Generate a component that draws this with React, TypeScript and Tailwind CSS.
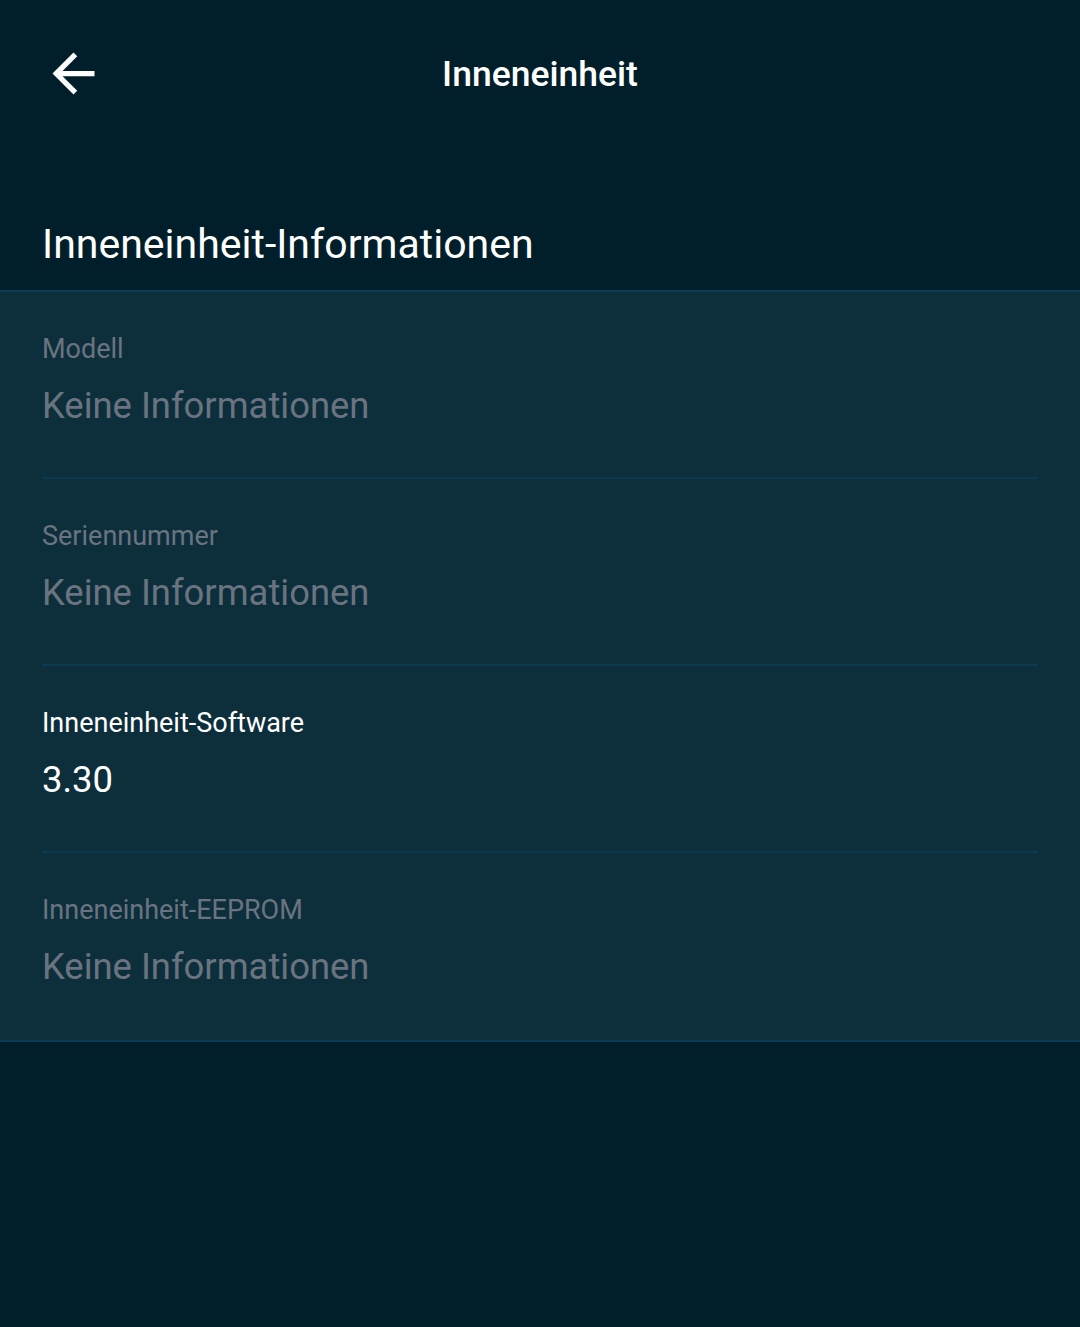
const rows = [
  { label: "Modell", value: "Keine Informationen", active: false },
  { label: "Seriennummer", value: "Keine Informationen", active: false },
  { label: "Inneneinheit-Software", value: "3.30", active: true },
  { label: "Inneneinheit-EEPROM", value: "Keine Informationen", active: false },
];

function BackArrow() {
  return (
    <svg viewBox="0 0 24 24" className="w-[63px] h-[63px]" fill="#ffffff">
      <path d="M20 11H7.83l5.59-5.59L12 4l-8 8 8 8 1.41-1.41L7.83 13H20v-2z" />
    </svg>
  );
}

export default function App() {
  return (
    <div className="min-h-[1327px] w-[1080px] bg-[#001f2a] font-['Roboto',sans-serif]">
      {/* Top bar */}
      <div className="relative h-[148px] flex items-start justify-center">
        <button className="absolute left-[42px] top-[42px]">
          <BackArrow />
        </button>
        <h1 className="mt-[50px] text-[35.5px] leading-[48px] font-medium text-white">
          Inneneinheit
        </h1>
      </div>

      {/* Section title */}
      <h2 className="px-[42px] pt-[68px] pb-[18px] text-[41px] leading-[56px] text-white">
        Inneneinheit-Informationen
      </h2>

      {/* Info list */}
      <div className="bg-[#0d2f3c] border-y-2 border-[#0a3b52]">
        {rows.map((row, i) => {
          const last = i === rows.length - 1;
          const color = row.active ? "text-white" : "text-[#6a7480]";
          return (
            <div key={row.label} className="px-[42px]">
              <div
                className={
                  "pt-[42px] " +
                  (last ? "pb-[51px]" : "pb-[49px] border-b-2 border-[#0a3a50]")
                }
              >
                <div className={"text-[27px] leading-[30px] " + color}>
                  {row.label}
                </div>
                <div className={"mt-[20px] text-[36.4px] leading-[44px] " + color}>
                  {row.value}
                </div>
              </div>
            </div>
          );
        })}
      </div>
    </div>
  );
}
